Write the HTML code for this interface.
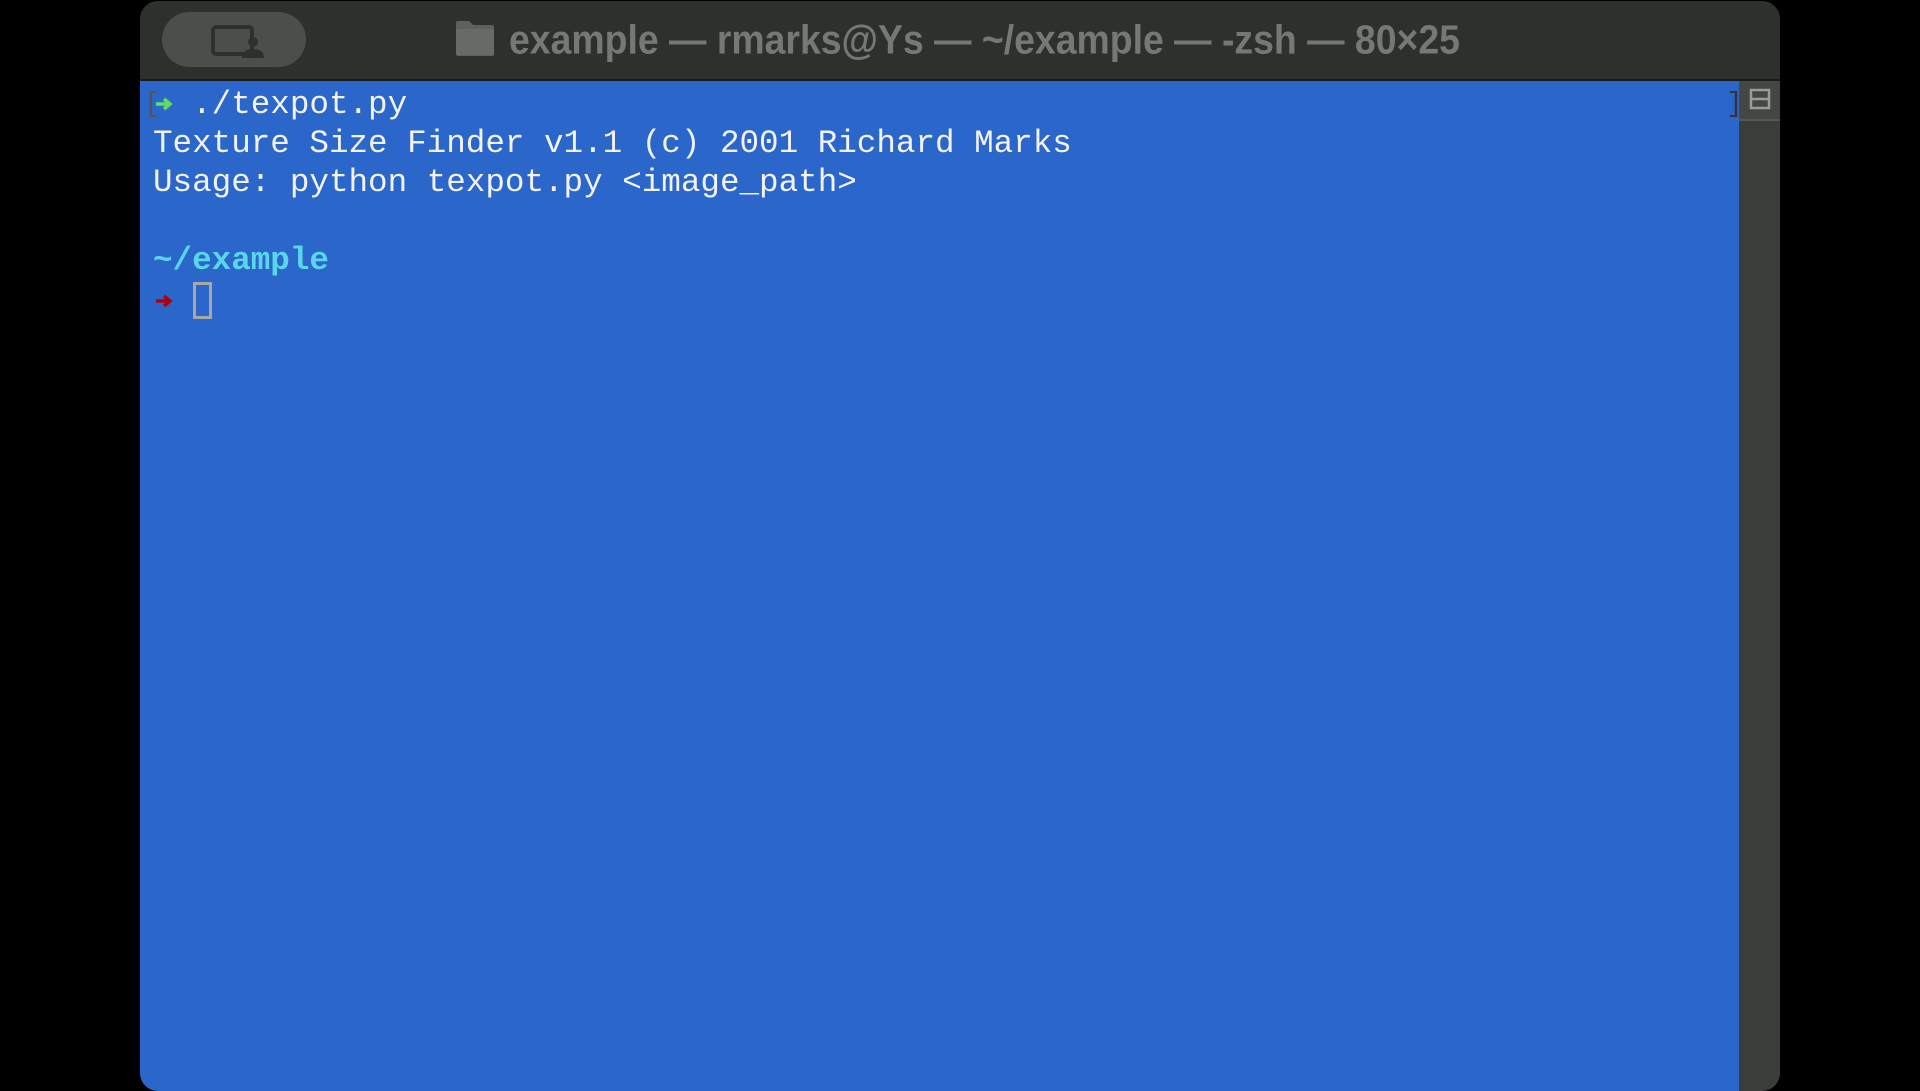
<!DOCTYPE html>
<html><head><meta charset="utf-8"><style>
body{margin:0;width:1920px;height:1080px;background:#000;overflow:hidden;position:relative;font-family:"Liberation Sans",sans-serif}
.win{position:absolute;left:140px;top:1px;width:1640px;height:1090px;border-radius:18px;overflow:hidden;background:#2c2f2c}
.title{position:absolute;left:0;top:0;width:1640px;height:78px;background:#2d302d;border-bottom:2px solid #1a1c1a}
.pill{position:absolute;left:22px;top:11px;width:144px;height:55px;border-radius:28px;background:#4b4e4b}
.ttl{position:absolute;left:369px;top:16px;font-size:37.4px;font-weight:bold;color:#757875;white-space:nowrap;transform:scaleY(1.08);transform-origin:left top}
.term{position:absolute;left:0;top:80px;width:1599px;height:1010px;background:#2b66cb}
.sb{position:absolute;left:1599px;top:80px;width:41px;height:1010px;background:#3a3d3a}
.sbb{position:absolute;left:0;top:0;width:41px;height:38px;background:#444744;border-bottom:2px solid #555855}
.t{position:absolute;left:13px;font-family:"Liberation Mono",monospace;font-size:32.6px;line-height:39.2px;color:#f2f2f2;white-space:pre}
.arr{position:absolute;left:15px}
</style></head><body>
<div class="win">
<div class="title">
 <div class="pill"><svg width="144" height="55" viewBox="0 0 144 55"><rect x="51" y="15" width="39" height="27" rx="3" fill="none" stroke="#2d302d" stroke-width="4"/><circle cx="91" cy="30" r="5" fill="#2d302d"/><path d="M80 46 q0-9 11-9 q11 0 11 9z" fill="#2d302d"/></svg></div>
 <svg style="position:absolute;left:315px;top:19px" width="40" height="36" viewBox="0 0 40 36"><path d="M1 3 q0-2 2-2 h11 l4 4 h19 q2 0 2 2 v27 q0 2-2 2 h-34 q-2 0-2-2z" fill="#5d605d"/><rect x="1" y="9" width="38" height="26" rx="2" fill="#676a67"/></svg>
 <div class="ttl">example — rmarks@Ys — ~/example — -zsh — 80×25</div>
</div>
<div class="term">
 <div class="t" style="left:4px;top:4px;color:#555;font-size:28px">[</div>
 <div class="t" style="left:1586px;top:4px;color:#333;font-size:28px">]</div>
 <svg class="arr" style="top:16px" width="18" height="14" viewBox="0 0 18 14"><path d="M1 7 H14 M9 2 L15 7 L9 12" fill="none" stroke="#5ee05e" stroke-width="3.5"/></svg>
 <div class="t" style="top:4px">  ./texpot.py</div>
 <div class="t" style="top:43px">Texture Size Finder v1.1 (c) 2001 Richard Marks</div>
 <div class="t" style="top:82px">Usage: python texpot.py &lt;image_path&gt;</div>
 <div class="t" style="top:160px;color:#5ad6ea;font-weight:bold">~/example</div>
 <svg class="arr" style="top:213px" width="18" height="14" viewBox="0 0 18 14"><path d="M1 7 H14 M9 2 L15 7 L9 12" fill="none" stroke="#b0000c" stroke-width="3.5"/></svg>
 <div style="position:absolute;left:53px;top:201px;width:19px;height:37px;border:3px solid #a7a7a7;box-sizing:border-box"></div>
</div>
<div class="sb"><div class="sbb"><svg width="41" height="38" viewBox="0 0 41 38"><rect x="12" y="9" width="18" height="18" fill="none" stroke="#9a9d9a" stroke-width="2.5"/><line x1="12" y1="18" x2="30" y2="18" stroke="#9a9d9a" stroke-width="2.5"/></svg></div></div>
</div>
</body></html>
